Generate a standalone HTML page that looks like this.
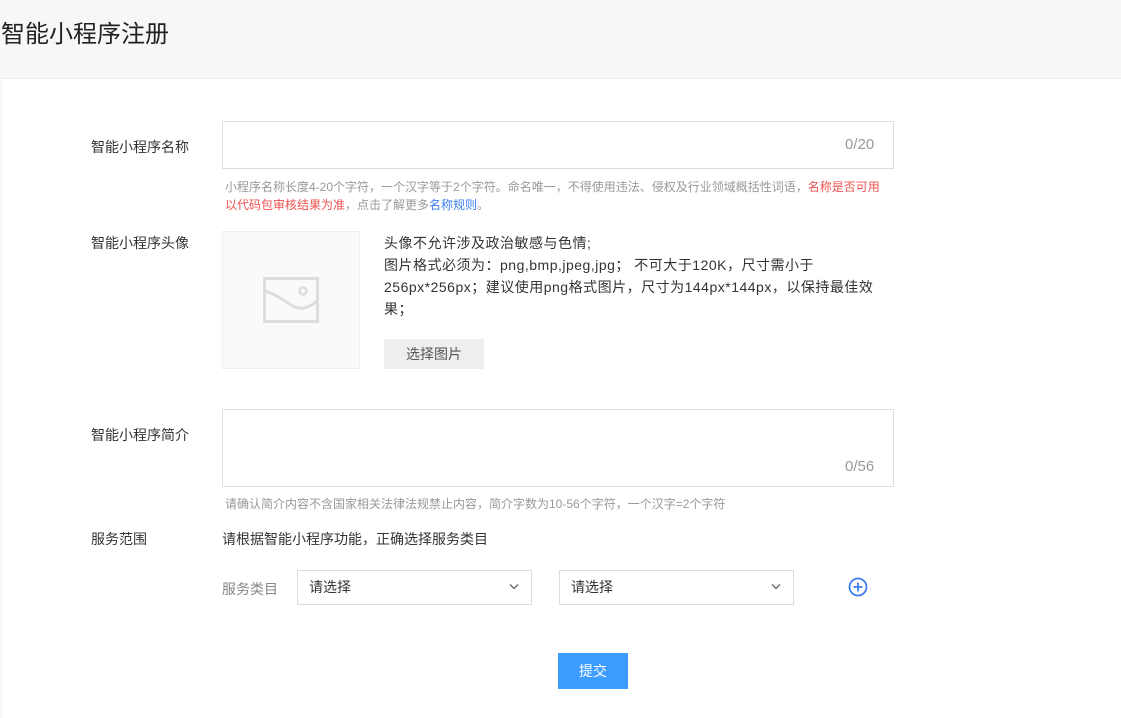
<!DOCTYPE html>
<html><head><meta charset="utf-8"><style>
*{margin:0;padding:0;box-sizing:border-box}
body{width:1121px;height:711px;background:#f7f7f7;font-family:"Liberation Sans","Noto Sans CJK SC",sans-serif;position:relative;overflow:hidden;color:#333}
.a{position:absolute;white-space:nowrap}
.panel{position:absolute;left:2px;top:78px;width:1119px;height:640px;background:#fff;border-top:1px solid #eee}
.lbl{font-size:14px;color:#333;left:91px}
.box{position:absolute;border:1px solid #ddd;background:#fff}
.hint{font-size:12px;color:#999}
.sel{position:absolute;border:1px solid #ddd;height:35px;font-size:14px;line-height:33px;padding-left:11px;color:#333}
.sel svg{position:absolute;right:12px;top:12px}
</style></head><body>
<div class="a" style="left:1px;top:14px;font-size:24px;color:#222">智能小程序注册</div>
<div class="panel"></div>
<div class="a lbl" style="top:137px">智能小程序名称</div>
<div class="box" style="left:222px;top:121px;width:672px;height:48px"></div>
<div class="a" style="left:845px;top:136px;font-size:15px;color:#999">0/20</div>
<div class="a hint" style="left:225px;top:178px">小程序名称长度4-20个字符，一个汉字等于2个字符。命名唯一，不得使用违法、侵权及行业领域概括性词语，<span style="color:#f05050">名称是否可用</span></div>
<div class="a hint" style="left:225px;top:196px"><span style="color:#f05050">以代码包审核结果为准</span>，点击了解更多<span style="color:#3c7cf0">名称规则</span>。</div>
<div class="a lbl" style="top:233px">智能小程序头像</div>
<div class="box" style="left:222px;top:231px;width:138px;height:138px;background:#fafafa;border-color:#eee"></div>
<svg class="a" style="left:263px;top:277px" width="56" height="46" viewBox="0 0 56 46"><rect x="1.5" y="1.5" width="53" height="43" fill="none" stroke="#ddd" stroke-width="3"/><path d="M2 14 Q14 18 28 28 Q40 36 54 24" fill="none" stroke="#ddd" stroke-width="3"/><circle cx="40" cy="14" r="3.5" fill="none" stroke="#ddd" stroke-width="2.5"/></svg>
<div class="a" style="left:384px;top:232px;font-size:14px;line-height:22px;color:#333;white-space:normal;width:510px;letter-spacing:0.5px">头像不允许涉及政治敏感与色情;<br>图片格式必须为：png,bmp,jpeg,jpg； 不可大于120K，尺寸需小于<br>256px*256px；建议使用png格式图片，尺寸为144px*144px，以保持最佳效<br>果；</div>
<div class="a" style="left:384px;top:339px;width:100px;height:30px;background:#eee;font-size:14px;line-height:30px;text-align:center;color:#555">选择图片</div>
<div class="a lbl" style="top:425px">智能小程序简介</div>
<div class="box" style="left:222px;top:409px;width:672px;height:78px"></div>
<div class="a" style="left:845px;top:458px;font-size:15px;color:#999">0/56</div>
<div class="a hint" style="left:225px;top:495px">请确认简介内容不含国家相关法律法规禁止内容，简介字数为10-56个字符，一个汉字=2个字符</div>
<div class="a lbl" style="top:529px">服务范围</div>
<div class="a" style="left:222px;top:529px;font-size:14px">请根据智能小程序功能，正确选择服务类目</div>
<div class="a" style="left:222px;top:579px;font-size:14px;color:#888">服务类目</div>
<div class="sel" style="left:297px;top:570px;width:235px">请选择<svg width="10" height="7" viewBox="0 0 10 7"><path d="M1 1.5 5 5.5 9 1.5" fill="none" stroke="#666" stroke-width="1.3"/></svg></div>
<div class="sel" style="left:559px;top:570px;width:235px">请选择<svg width="10" height="7" viewBox="0 0 10 7"><path d="M1 1.5 5 5.5 9 1.5" fill="none" stroke="#666" stroke-width="1.3"/></svg></div>
<svg class="a" style="left:848px;top:577px" width="20" height="20" viewBox="0 0 20 20"><circle cx="10" cy="10" r="8.5" fill="none" stroke="#3c7cf0" stroke-width="1.8"/><path d="M10 5.5v9M5.5 10h9" stroke="#3c7cf0" stroke-width="1.8"/></svg>
<div class="a" style="left:558px;top:653px;width:70px;height:36px;background:#3c9cff;color:#fff;font-size:14px;line-height:36px;text-align:center">提交</div>
</body></html>
